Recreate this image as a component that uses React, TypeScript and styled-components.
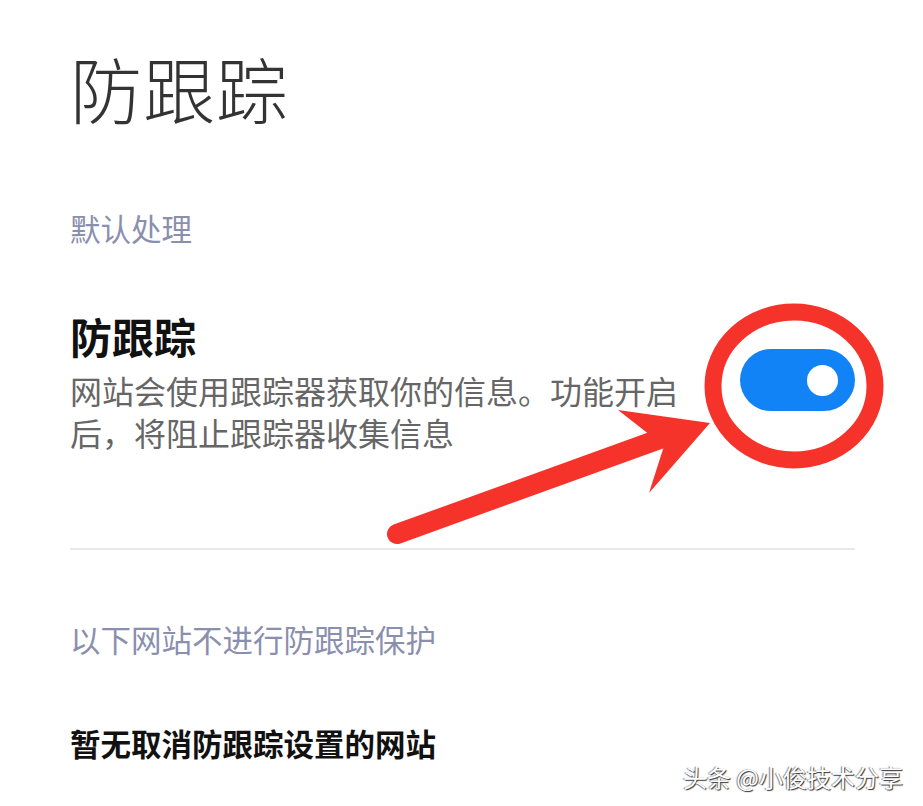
import React from "react";
import styled, { createGlobalStyle } from "styled-components";

const Global = createGlobalStyle`
  html, body { margin: 0; padding: 0; background: #ffffff; }
  body { font-family: "Noto Sans CJK SC", "Noto Sans", sans-serif; }
`;

const Page = styled.div`
  position: relative;
  width: 923px;
  height: 806px;
  overflow: hidden;
  background: #ffffff;
  box-sizing: border-box;
  padding: 0 68px 0 70px;
`;

const Title = styled.h1`
  margin: 0;
  padding-top: 46px;
  font-size: 72px;
  line-height: 82px;
  font-weight: 300;
  color: #333333;
  letter-spacing: 1px;
`;

const SectionLabel = styled.div<{ $top: number }>`
  margin-top: ${(p) => p.$top}px;
  font-size: 30.5px;
  line-height: 40px;
  color: #8b8fae;
`;

const SettingRow = styled.div`
  display: flex;
  align-items: center;
  justify-content: space-between;
  margin-top: 62px;
  padding-bottom: 95px;
  border-bottom: 2px solid #e8e8e8;
`;

const SettingText = styled.div`
  display: flex;
  flex-direction: column;
  width: 620px;
`;

const SettingName = styled.div`
  font-size: 42px;
  line-height: 52px;
  font-weight: 700;
  color: #111111;
`;

const SettingDesc = styled.div`
  margin-top: 7px;
  font-size: 32px;
  line-height: 42px;
  color: #666666;
`;

const Toggle = styled.div`
  position: relative;
  width: 115px;
  height: 62px;
  border-radius: 31px;
  background: #1283f6;
  margin-top: -4px;
`;

const Knob = styled.div`
  position: absolute;
  right: 17px;
  top: 16px;
  width: 31px;
  height: 31px;
  border-radius: 50%;
  background: #ffffff;
`;

const EmptyText = styled.div`
  margin-top: 64px;
  font-size: 30.5px;
  line-height: 40px;
  font-weight: 700;
  color: #111111;
`;

const Annotation = styled.svg`
  position: absolute;
  left: 0;
  top: 0;
  pointer-events: none;
`;

const Watermark = styled.div`
  position: absolute;
  right: 20px;
  bottom: 14px;
  font-size: 24px;
  line-height: 30px;
  color: #ffffff;
  text-shadow: 1px 1px 1px #333, -1px 0 1px rgba(0, 0, 0, 0.5);
`;

export default function App() {
  return (
    <>
      <Global />
      <Page>
        <Title>防跟踪</Title>
        <SectionLabel $top={80}>默认处理</SectionLabel>
        <SettingRow>
          <SettingText>
            <SettingName>防跟踪</SettingName>
            <SettingDesc>
              网站会使用跟踪器获取你的信息。功能开启后，将阻止跟踪器收集信息
            </SettingDesc>
          </SettingText>
          <Toggle>
            <Knob />
          </Toggle>
        </SettingRow>
        <SectionLabel $top={69}>以下网站不进行防跟踪保护</SectionLabel>
        <EmptyText>暂无取消防跟踪设置的网站</EmptyText>
        <Annotation width="923" height="806" viewBox="0 0 923 806">
          <ellipse cx="794" cy="386" rx="81" ry="74" fill="none" stroke="#f5332b" strokeWidth="17" />
          <line x1="397" y1="534" x2="668" y2="436" stroke="#f5332b" strokeWidth="20" strokeLinecap="round" />
          <polygon points="618,410 710,423 649,493 664,446" fill="#f5332b" />
        </Annotation>
        <Watermark>头条 @小俊技术分享</Watermark>
      </Page>
    </>
  );
}
